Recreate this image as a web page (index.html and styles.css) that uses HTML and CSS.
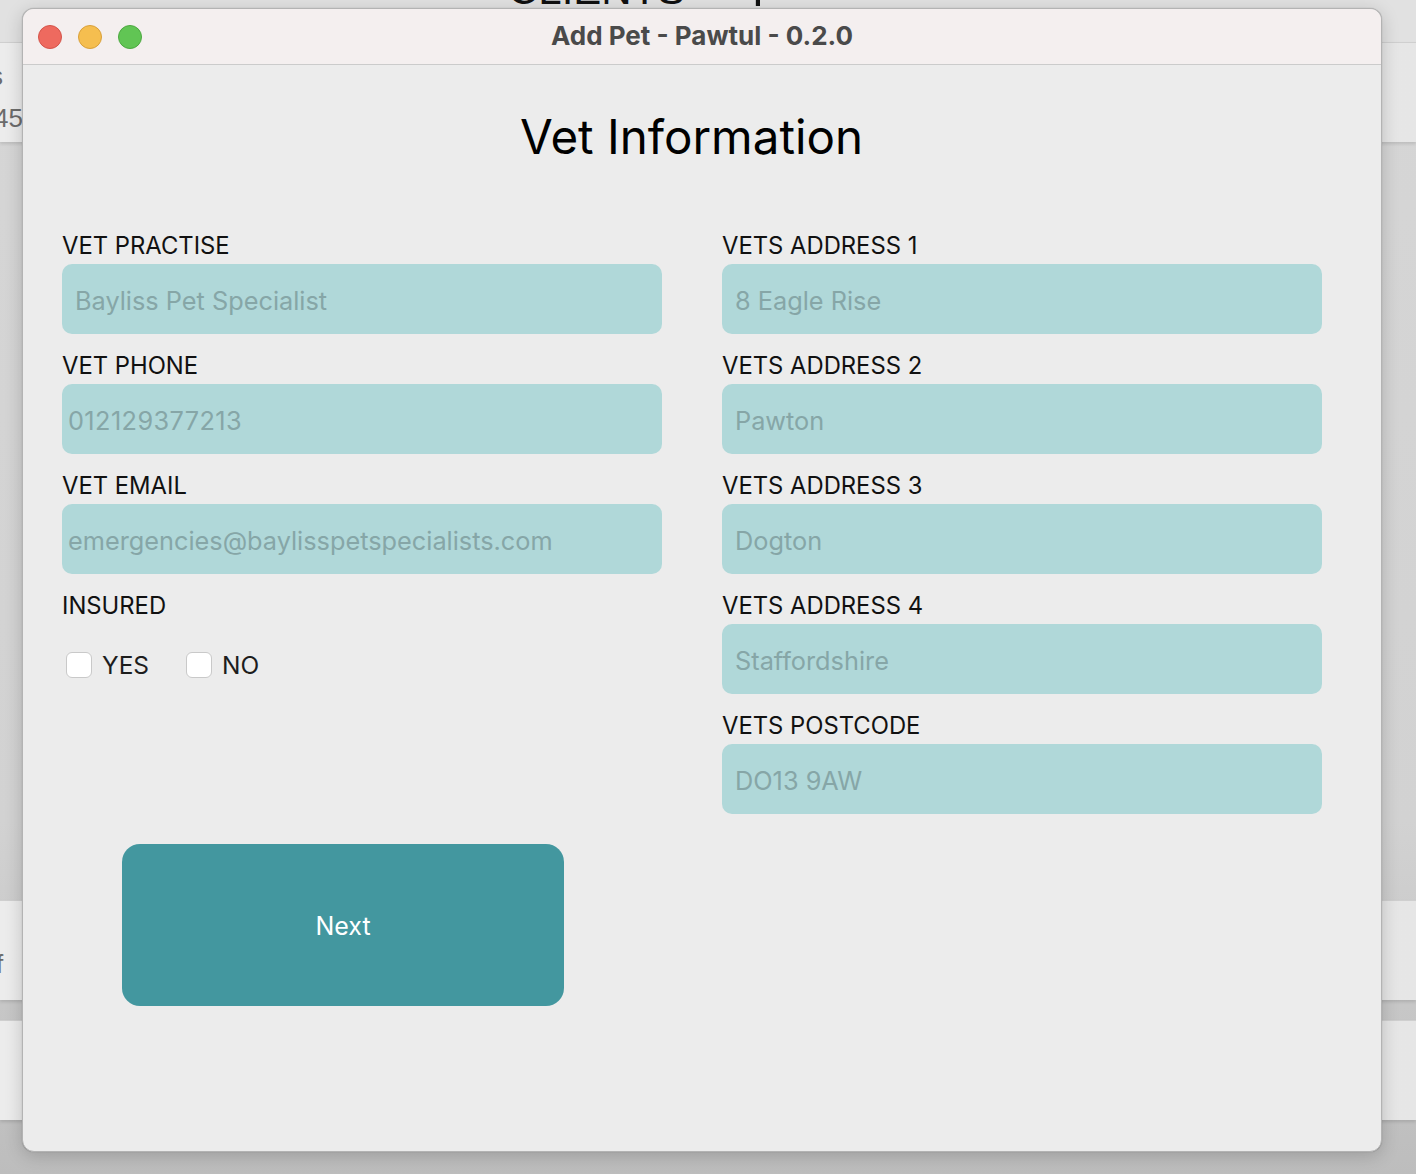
FILE: index.html
```html
<!DOCTYPE html>
<html lang="en">
<head>
<meta charset="utf-8">
<title>Add Pet - Pawtul - 0.2.0</title>
<link rel="stylesheet" href="styles.css">
</head>
<body>
<div class="desktop">
  <div class="bg-top">
    <span class="bg-clients">CLIENTS</span>
    <span class="bg-plus">+</span>
  </div>
  <div class="bg-row bg-row-1"><span class="bg-s">s</span><span class="bg-num">45</span></div>
  <div class="bg-row bg-row-2"><span class="bg-f">f</span></div>
  <div class="bg-row bg-row-3"></div>

  <div class="window">
    <div class="titlebar">
      <div class="lights">
        <span class="light red"></span>
        <span class="light yellow"></span>
        <span class="light green"></span>
      </div>
      <div class="title">Add Pet - Pawtul - 0.2.0</div>
    </div>
    <div class="content">
      <h1 class="heading">Vet Information</h1>
      <div class="columns">
        <div class="col">
          <div class="field">
            <label class="label">VET PRACTISE</label>
            <input class="input" type="text" placeholder="Bayliss Pet Specialist">
          </div>
          <div class="field">
            <label class="label">VET PHONE</label>
            <input class="input input-tight input-digits" type="text" placeholder="012129377213">
          </div>
          <div class="field">
            <label class="label">VET EMAIL</label>
            <input class="input input-tight" type="text" placeholder="emergencies@baylisspetspecialists.com">
          </div>
          <div class="field">
            <label class="label">INSURED</label>
            <div class="checks">
              <label class="check"><span class="box"></span><span>YES</span></label>
              <label class="check"><span class="box"></span><span>NO</span></label>
            </div>
          </div>
        </div>
        <div class="col">
          <div class="field">
            <label class="label">VETS ADDRESS 1</label>
            <input class="input" type="text" placeholder="8 Eagle Rise">
          </div>
          <div class="field">
            <label class="label">VETS ADDRESS 2</label>
            <input class="input" type="text" placeholder="Pawton">
          </div>
          <div class="field">
            <label class="label">VETS ADDRESS 3</label>
            <input class="input" type="text" placeholder="Dogton">
          </div>
          <div class="field">
            <label class="label">VETS ADDRESS 4</label>
            <input class="input" type="text" placeholder="Staffordshire">
          </div>
          <div class="field">
            <label class="label">VETS POSTCODE</label>
            <input class="input" type="text" placeholder="DO13 9AW">
          </div>
        </div>
      </div>
      <button class="next" type="button">Next</button>
    </div>
  </div>
</div>
</body>
</html>
```

FILE: styles.css
```css
* { box-sizing: border-box; }

html, body {
  margin: 0;
  padding: 0;
}

body {
  width: 1416px;
  height: 1174px;
  overflow: hidden;
  background: linear-gradient(180deg, #d6d6d6 0%, #d2d2d2 70%, #bdbdbd 100%);
  font-family: Inter, "Noto Sans", "Liberation Sans", sans-serif;
}

.desktop {
  position: relative;
  width: 1416px;
  height: 1174px;
}

/* background app (behind the dialog) */
.bg-top {
  position: absolute;
  left: 0;
  top: 0;
  width: 1416px;
  height: 42px;
  background: #e1e1e1;
  overflow: hidden;
}

.bg-clients {
  position: absolute;
  left: 508px;
  top: -31px;
  font-family: "Liberation Sans", sans-serif;
  font-size: 42px;
  line-height: 42px;
  color: #111;
}

.bg-plus {
  position: absolute;
  left: 741px;
  top: -38px;
  font-family: "Liberation Sans", sans-serif;
  font-size: 58px;
  line-height: 58px;
  color: #111;
}

.bg-row {
  position: absolute;
  left: 0;
  width: 1416px;
  height: 100px;
  background: linear-gradient(90deg, #ececec 0%, #e6e6e6 100%);
  border-top: 1px solid #cfcfcf;
  box-shadow: 0 2px 3px rgba(0,0,0,0.12);
}

.bg-row-1 { top: 42px; }
.bg-row-2 { top: 900px; }
.bg-row-3 { top: 1020px; }

.bg-s, .bg-num, .bg-f {
  position: absolute;
  font-family: "Liberation Sans", sans-serif;
  color: #6b6b6b;
  font-size: 26px;
}
.bg-s { left: -10px; top: 18px; }
.bg-num { left: -6px; top: 60px; }
.bg-f { left: -4px; top: 48px; }

/* dialog window */
.window {
  position: absolute;
  left: 22px;
  top: 8px;
  width: 1360px;
  height: 1144px;
  background: #ececec;
  border: 1px solid #b3b3b3;
  border-radius: 12px;
  overflow: hidden;
  box-shadow: 0 4px 18px rgba(0,0,0,0.18), 0 0 1px rgba(0,0,0,0.3);
  display: flex;
  flex-direction: column;
}

.titlebar {
  height: 56px;
  flex: none;
  background: #f4efef;
  border-bottom: 1px solid #cbcbcb;
  display: flex;
  align-items: center;
  position: relative;
}

.lights {
  display: flex;
  gap: 16px;
  padding-left: 15px;
}

.light {
  width: 24px;
  height: 24px;
  border-radius: 50%;
  display: block;
}
.red { background: #ee6a5f; border: 1px solid #d4544a; }
.yellow { background: #f5be4f; border: 1px solid #d9a03a; }
.green { background: #61c554; border: 1px solid #4ca840; }

.title {
  position: absolute;
  left: 0;
  right: 0;
  top: 0;
  bottom: 0;
  padding-bottom: 3px;
  display: flex;
  align-items: center;
  justify-content: center;
  font-weight: 700;
  font-size: 26px;
  color: #4a4a4a;
}

.content {
  padding: 42px 60px 0 39px;
  display: flex;
  flex-direction: column;
}

.heading {
  margin: 0;
  text-align: center;
  font-weight: 400;
  font-size: 47.5px;
  line-height: 60px;
  color: #000;
  height: 60px;
}

.columns {
  display: grid;
  grid-template-columns: 600px 600px;
  column-gap: 60px;
  margin-top: 67px;
}

.col {
  display: flex;
  flex-direction: column;
  gap: 20px;
}

.field {
  display: flex;
  flex-direction: column;
}

.label {
  display: block;
  height: 30px;
  line-height: 24px;
  font-size: 23.8px;
  color: #111;
}

.input {
  width: 600px;
  height: 70px;
  border: none;
  outline: none;
  border-radius: 10px;
  background: #b0d8d9;
  padding: 2px 13px 0;
  font-family: inherit;
  font-size: 25.3px;
  color: #222;
}
.input-tight { padding: 2px 6px 0; }
.input-digits { letter-spacing: 0.4px; }

.input::placeholder {
  color: #86a6a7;
  opacity: 1;
}

.checks {
  display: flex;
  align-items: center;
  height: 38px;
  margin-top: 22px;
  padding-left: 4px;
  gap: 37px;
}

.check {
  display: flex;
  align-items: center;
  gap: 10px;
  font-size: 24.5px;
  color: #1d1d1d;
}

.box {
  width: 26px;
  height: 26px;
  border-radius: 6px;
  background: #fff;
  border: 1px solid #c9c9c9;
  display: block;
}

.next {
  margin-top: 30px;
  margin-left: 60px;
  width: 442px;
  height: 162px;
  border: none;
  border-radius: 18px;
  background: #43979f;
  color: #fff;
  font-family: inherit;
  font-size: 25px;
  padding-top: 2px;
  cursor: pointer;
}
```
